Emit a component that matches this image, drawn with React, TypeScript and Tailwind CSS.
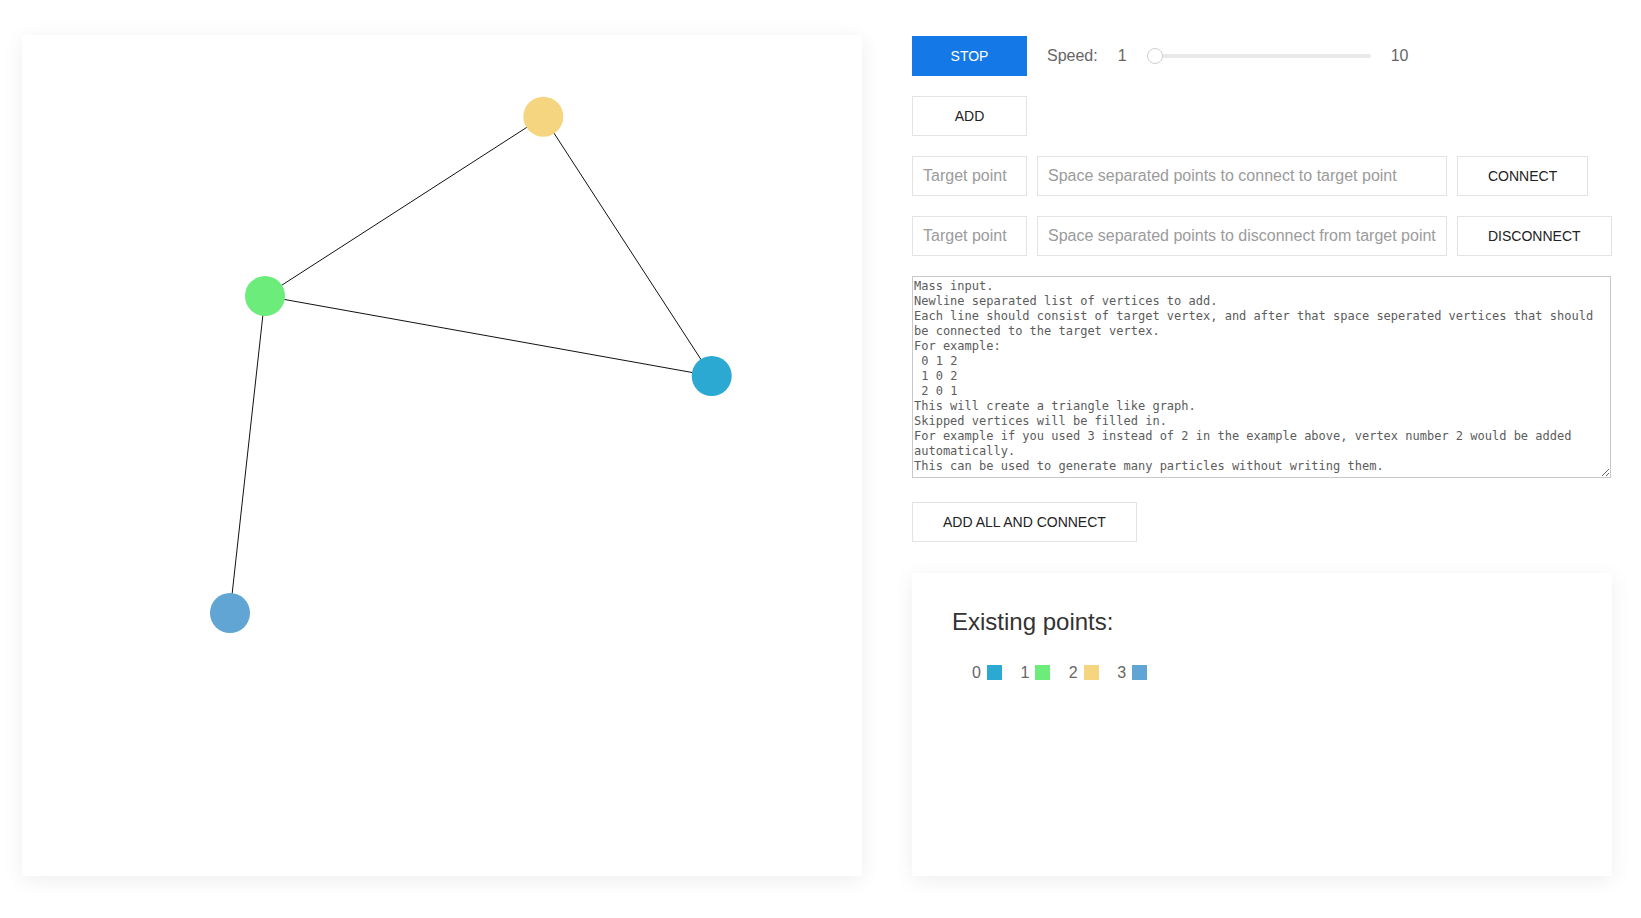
import React from "react";

const nodes = [
  { id: 0, x: 689.7, y: 341, color: "#2ca9d2" },
  { id: 1, x: 243, y: 261, color: "#6bec7b" },
  { id: 2, x: 521.3, y: 81.7, color: "#f5d580" },
  { id: 3, x: 208, y: 578, color: "#60a5d3" },
];

const edges: [number, number][] = [
  [1, 2],
  [2, 0],
  [1, 0],
  [1, 3],
];

const massText = `Mass input.
Newline separated list of vertices to add.
Each line should consist of target vertex, and after that space seperated vertices that should be connected to the target vertex.
For example:
 0 1 2
 1 0 2
 2 0 1
This will create a triangle like graph.
Skipped vertices will be filled in.
For example if you used 3 instead of 2 in the example above, vertex number 2 would be added automatically.
This can be used to generate many particles without writing them.`;

const btn =
  "h-10 border border-[#e3e3e3] bg-white text-[14px] text-[#222] font-['Liberation_Sans',Arial,sans-serif] flex items-center justify-center";
const inp =
  "h-10 border border-[#e3e3e3] bg-white px-[10px] text-[16px] text-[#333] placeholder:text-[#9b9b9b] font-['Liberation_Sans',Arial,sans-serif] outline-none";

export default function App() {
  return (
    <div className="min-h-[918px] bg-white flex pl-[22px] pt-[35px] gap-[50px] font-['Liberation_Sans',Arial,sans-serif]">
      <div className="w-[840px] h-[841px] bg-white shadow-[0_4px_20px_rgba(0,0,0,0.07)] shrink-0">
        <svg width="840" height="841" viewBox="0 0 840 841">
          {edges.map(([a, b], i) => (
            <line
              key={i}
              x1={nodes[a].x}
              y1={nodes[a].y}
              x2={nodes[b].x}
              y2={nodes[b].y}
              stroke="#111"
              strokeWidth={1}
            />
          ))}
          {nodes.map((n) => (
            <circle key={n.id} cx={n.x} cy={n.y} r={20} fill={n.color} />
          ))}
        </svg>
      </div>

      <div className="w-[700px] h-[841px] flex flex-col shrink-0 pt-px">
        <div className="flex items-center h-10">
          <button className="w-[115px] h-10 bg-[#1479e6] text-white text-[14px] flex items-center justify-center">
            STOP
          </button>
          <span className="ml-5 text-[16px] text-[#666]">Speed:</span>
          <span className="ml-5 text-[16px] text-[#666]">1</span>
          <div className="ml-5 w-[224px] h-4 relative flex items-center">
            <div className="w-full h-1 rounded-full bg-[#e9e9e9]" />
            <div className="absolute left-0 top-0 w-4 h-4 rounded-full bg-white border-[1.5px] border-[#cfcfcf]" />
          </div>
          <span className="ml-5 text-[16px] text-[#666]">10</span>
        </div>

        <div className="mt-5 flex">
          <button className={btn + " w-[115px]"}>ADD</button>
        </div>

        <div className="mt-5 flex gap-[10px]">
          <input className={inp + " w-[115px]"} placeholder="Target point" />
          <input
            className={inp + " w-[410px]"}
            placeholder="Space separated points to connect to target point"
          />
          <button className={btn + " px-[30px]"}>CONNECT</button>
        </div>

        <div className="mt-5 flex gap-[10px]">
          <input className={inp + " w-[115px]"} placeholder="Target point" />
          <input
            className={inp + " w-[410px]"}
            placeholder="Space separated points to disconnect from target point"
          />
          <button className={btn + " px-[30px]"}>DISCONNECT</button>
        </div>

        <textarea
          className="mt-[20px] w-[699px] h-[202px] border border-[#c8c8c8] pt-[2px] pl-px pr-px text-[12px] leading-[15px] font-['DejaVu_Sans_Mono',monospace] text-[#555] placeholder:text-[#5c5c5c] outline-none block"
          placeholder={massText}
        />

        <div className="mt-6 flex">
          <button className={btn + " px-[30px]"}>ADD ALL AND CONNECT</button>
        </div>

        <div className="mt-[31px] flex-1 bg-white shadow-[0_4px_20px_rgba(0,0,0,0.07)] pt-[35px] pl-[40px]">
          <h2 className="text-[24px] leading-[27.6px] text-[#333] font-normal">
            Existing points:
          </h2>
          <div className="mt-[28px] ml-[20px] flex items-center gap-[18.5px] leading-[18px]">
            {nodes.map((n) => (
              <div key={n.id} className="flex items-center">
                <span className="text-[16px] text-[#666]">{n.id}</span>
                <span
                  className="ml-[6px] w-[15px] h-[15px] inline-block"
                  style={{ backgroundColor: n.color }}
                />
              </div>
            ))}
          </div>
        </div>
      </div>
    </div>
  );
}
